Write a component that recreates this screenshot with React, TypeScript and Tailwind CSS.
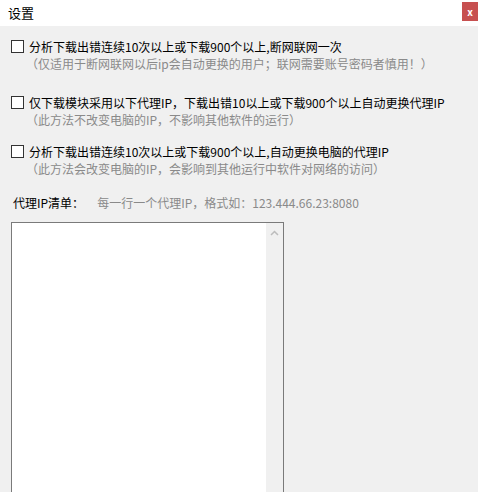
import React from 'react';

const font = { fontFamily: '"Noto Sans CJK SC", "Liberation Sans", sans-serif' };

type Option = {
  title: string;
  note: string;
  className: string;
};

const options: Option[] = [
  {
    title: '分析下载出错连续10次以上或下载900个以上,断网联网一次',
    note: '（仅适用于断网联网以后ip会自动更换的用户；联网需要账号密码者慎用！）',
    className: 'mt-[12px]',
  },
  {
    title: '仅下载模块采用以下代理IP，下载出错10以上或下载900个以上自动更换代理IP',
    note: '（此方法不改变电脑的IP，不影响其他软件的运行）',
    className: 'mt-[22px]',
  },
  {
    title: '分析下载出错连续10次以上或下载900个以上,自动更换电脑的代理IP',
    note: '（此方法会改变电脑的IP，会影响到其他运行中软件对网络的访问）',
    className: 'mt-[15px]',
  },
];

function CheckOption({ title, note, className }: Option) {
  return (
    <div className={className}>
      <label className="flex h-[17px] items-center">
        <span className="ml-[11px] h-[13px] w-[13px] shrink-0 border border-[#333] bg-white" />
        <span className="ml-[5px] whitespace-nowrap text-[12px] leading-[17px] text-black">
          {title}
        </span>
      </label>
      <div className="ml-[26px] whitespace-nowrap text-[12px] leading-[17px] text-[#8a8a8a]">
        {note}
      </div>
    </div>
  );
}

export default function App() {
  return (
    <div className="h-[492px] w-[478px] overflow-hidden bg-[#f0f0f0]" style={font}>
      <div className="flex h-[26px] items-center justify-between bg-white">
        <span className="ml-[8px] text-[13px] text-black">设置</span>
        <button className="mb-[3px] flex h-[19px] w-[16px] items-center justify-center bg-[#c75050] text-[10px] font-bold leading-none text-white">
          x
        </button>
      </div>

      {options.map((o) => (
        <CheckOption key={o.title} {...o} />
      ))}

      <div className="mt-[17px] flex h-[17px] items-center whitespace-nowrap text-[12px]">
        <span className="ml-[13px] text-black">代理IP清单：</span>
        <span className="ml-[13px] text-[#8a8a8a]">每一行一个代理IP，格式如：123.444.66.23:8080</span>
      </div>

      <div className="ml-[11px] mt-[11px] flex h-[300px] w-[273px] border border-[#7a7a7a] bg-white">
        <textarea className="h-full flex-1 resize-none bg-white outline-none" />
        <div className="flex w-[17px] justify-center bg-[#f0f0f0] pt-[7px]">
          <svg width="9" height="6" viewBox="0 0 9 6">
            <path d="M1 5 L4.5 1.5 L8 5" fill="none" stroke="#bcbcbc" strokeWidth="1.5" />
          </svg>
        </div>
      </div>
    </div>
  );
}
